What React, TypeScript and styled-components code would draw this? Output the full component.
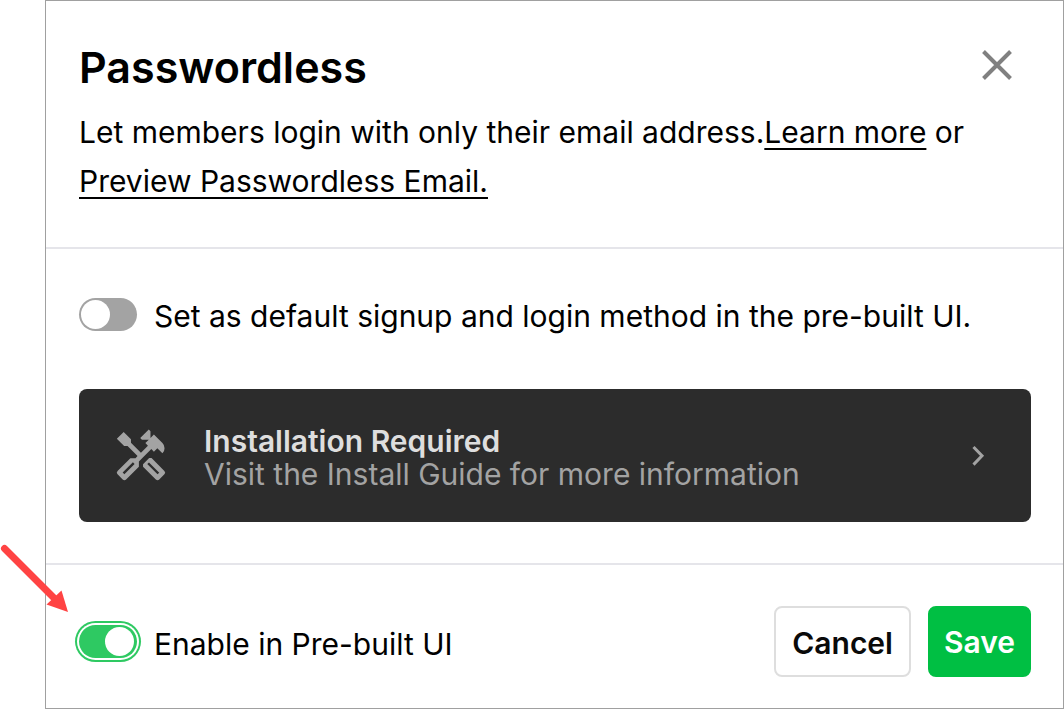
import { useState } from "react";
import styled, { createGlobalStyle } from "styled-components";
import { MdOutlineHandyman } from "react-icons/md";

const GlobalStyle = createGlobalStyle`
  *, *::before, *::after { box-sizing: border-box; }
  body {
    margin: 0;
    background: #fff;
    color: #000;
    font-family: Inter, "Liberation Sans", sans-serif;
    font-size: 30px;
  }
`;

const Page = styled.main`
  position: relative;
  padding-left: 45px;
`;

const Dialog = styled.section`
  border: 1px solid #a0a0a0;
`;

const Header = styled.header`
  padding: 40px 33px 41px;
  border-bottom: 2px solid #e5e5ea;
`;

const TitleRow = styled.div`
  display: flex;
  justify-content: space-between;
  align-items: flex-start;
`;

const Title = styled.h1`
  margin: 0;
  font-size: 43px;
  line-height: 52px;
  font-weight: 600;
`;

const CloseButton = styled.button`
  display: flex;
  padding: 8px 17px;
  border: 0;
  background: none;
  cursor: pointer;
`;

const Description = styled.p`
  margin: 15px 0 0;
  line-height: 49px;
`;

const TextLink = styled.a`
  color: inherit;
  text-decoration: underline 2px;
  text-underline-offset: 5px;
  text-decoration-skip-ink: none;
`;

const Body = styled.div`
  padding: 40px 32px 41px 33px;
  border-bottom: 2px solid #e5e5ea;
`;

const ToggleLabel = styled.label`
  display: flex;
  align-items: center;
  gap: 17px;
  line-height: 46px;
  cursor: pointer;
`;

const ToggleText = styled.span`
  padding-top: 4px;
`;

const Switch = styled.input<{ $ring?: boolean }>`
  appearance: none;
  flex: none;
  display: flex;
  width: 58px;
  height: 33px;
  margin: 0;
  padding: 2px;
  border-radius: 17px;
  background: #a3a3a3;
  box-shadow: ${(p) => (p.$ring ? "0 0 0 2px #fff, 0 0 0 4px #2ec962" : "none")};
  cursor: pointer;

  &::before {
    content: "";
    width: 29px;
    height: 29px;
    border-radius: 50%;
    background: #fff;
  }
  &:checked {
    justify-content: flex-end;
    padding-right: 3px;
    background: #2ec962;
  }
`;

const InstallCard = styled.a`
  display: flex;
  align-items: center;
  margin-top: 50px;
  padding: 31px 32px 31px 33px;
  border-radius: 8px;
  background: #2c2c2c;
  color: #a3a3a3;
  text-decoration: none;
`;

const InstallText = styled.span`
  flex: 1;
  margin-left: 34px;
  padding-top: 5px;
  line-height: 33px;
`;

const InstallTitle = styled.strong`
  display: block;
  color: #dedede;
  font-weight: 600;
`;

const Footer = styled.footer`
  display: flex;
  justify-content: space-between;
  align-items: center;
  padding: 41px 32px 31px 33px;
`;

const Actions = styled.div`
  display: flex;
  gap: 17px;
`;

const ActionButton = styled.button`
  height: 71px;
  padding: 2px 16px 0;
  border: 2px solid #dedede;
  border-radius: 8px;
  background: #fff;
  color: #0a0a0a;
  font: inherit;
  font-weight: 600;
  cursor: pointer;
`;

const PrimaryButton = styled(ActionButton)`
  padding: 0 14px;
  border-color: #00bf43;
  background: #00bf43;
  color: #fff;
`;

const Pointer = styled.svg`
  position: absolute;
  left: 0;
  top: 540px;
  pointer-events: none;
`;

export default function App() {
  const [isDefault, setIsDefault] = useState(false);
  const [enabled, setEnabled] = useState(true);

  return (
    <Page>
      <GlobalStyle />
      <Dialog role="dialog" aria-labelledby="dialog-title">
        <Header>
          <TitleRow>
            <Title id="dialog-title">Passwordless</Title>
            <CloseButton type="button" aria-label="Close">
              <svg width="32" height="32" viewBox="0 0 32 32" aria-hidden="true">
                <path d="M2.5 2.5 29.5 29.5M29.5 2.5 2.5 29.5" stroke="#808080" strokeWidth="4" />
              </svg>
            </CloseButton>
          </TitleRow>
          <Description>
            Let members login with only their email address.
            <TextLink href="#learn">Learn more</TextLink> or{" "}
            <TextLink href="#preview">Preview Passwordless Email.</TextLink>
          </Description>
        </Header>
        <Body>
          <ToggleLabel>
            <Switch
              type="checkbox"
              role="switch"
              checked={isDefault}
              onChange={(e) => setIsDefault(e.target.checked)}
            />
            <ToggleText>Set as default signup and login method in the pre-built UI.</ToggleText>
          </ToggleLabel>
          <InstallCard href="#install">
            <MdOutlineHandyman size={58} aria-hidden="true" />
            <InstallText>
              <InstallTitle>Installation Required</InstallTitle>
              Visit the Install Guide for more information
            </InstallText>
            <svg width="40" height="40" viewBox="0 0 40 40" aria-hidden="true">
              <path d="M14.5 11 23 19.8 14.5 28.6" fill="none" stroke="#a3a3a3" strokeWidth="3" />
            </svg>
          </InstallCard>
        </Body>
        <Footer>
          <ToggleLabel>
            <Switch
              type="checkbox"
              role="switch"
              $ring
              checked={enabled}
              onChange={(e) => setEnabled(e.target.checked)}
            />
            <ToggleText>Enable in Pre-built UI</ToggleText>
          </ToggleLabel>
          <Actions>
            <ActionButton type="button">Cancel</ActionButton>
            <PrimaryButton type="button">Save</PrimaryButton>
          </Actions>
        </Footer>
      </Dialog>
      <Pointer width="80" height="80" viewBox="0 0 80 80" aria-hidden="true">
        <path d="M4.5 8.5 54 58" stroke="#ff4343" strokeWidth="7" strokeLinecap="round" />
        <path d="M68 72 46.500 64.500 61.500 50.500Z" fill="#ff4343" />
      </Pointer>
    </Page>
  );
}
